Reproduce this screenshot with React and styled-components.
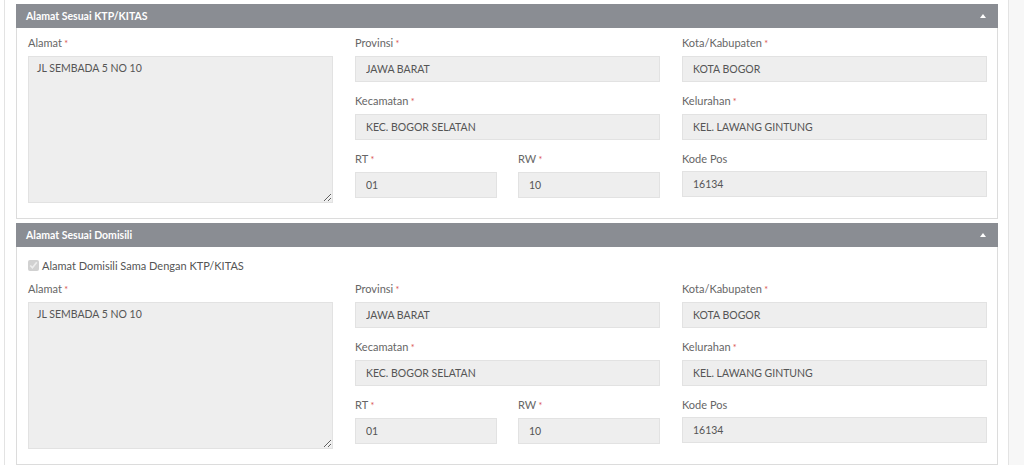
import React from "react";
import styled, { createGlobalStyle } from "styled-components";

const GlobalStyle = createGlobalStyle`
  html, body {
    margin: 0;
    padding: 0;
    background: #fff;
    font-family: Lato, "Open Sans", sans-serif;
  }
`;

const address = {
  alamat: "JL SEMBADA 5 NO 10",
  provinsi: "JAWA BARAT",
  kota: "KOTA BOGOR",
  kecamatan: "KEC. BOGOR SELATAN",
  kelurahan: "KEL. LAWANG GINTUNG",
  rt: "01",
  rw: "10",
  kodePos: "16134",
};

const Field = ({ label, required, value, area }) => (
  <FieldWrap>
    <Label>
      {label}
      {required && <Req> *</Req>}
    </Label>
    {area ? (
      <TextArea readOnly value={value} />
    ) : (
      <Input readOnly value={value} />
    )}
  </FieldWrap>
);

const AddressPanel = ({ title, data, sameAs }) => (
  <Panel>
    <PanelHeader>
      <PanelTitle>{title}</PanelTitle>
      <Caret />
    </PanelHeader>
    <PanelBody>
      {sameAs && (
        <CheckRow>
          <Check type="checkbox" checked disabled readOnly />
          <CheckText>{sameAs}</CheckText>
        </CheckRow>
      )}
      <Grid>
        <Column>
          <Field label="Alamat" required area value={data.alamat} />
        </Column>
        <Column>
          <Field label="Provinsi" required value={data.provinsi} />
          <Field label="Kecamatan" required value={data.kecamatan} />
          <Pair>
            <Field label="RT" required value={data.rt} />
            <Field label="RW" required value={data.rw} />
          </Pair>
        </Column>
        <Column>
          <Field label="Kota/Kabupaten" required value={data.kota} />
          <Field label="Kelurahan" required value={data.kelurahan} />
          <Field label="Kode Pos" value={data.kodePos} />
        </Column>
      </Grid>
    </PanelBody>
  </Panel>
);

const App = () => (
  <>
    <GlobalStyle />
    <Page>
      <Content>
        <AddressPanel title="Alamat Sesuai KTP/KITAS" data={address} />
        <AddressPanel
          title="Alamat Sesuai Domisili"
          data={address}
          sameAs="Alamat Domisili Sama Dengan KTP/KITAS"
        />
      </Content>
      <SideStrip />
    </Page>
  </>
);

const Page = styled.div`
  display: flex;
  height: 465px;
  padding-left: 4px;
  box-sizing: border-box;
  overflow: hidden;
`;

const Content = styled.div`
  width: 1005px;
  box-sizing: border-box;
  border-left: 1px solid #e3e3e3;
  border-right: 1px solid #e3e3e3;
  padding: 4px 10px 0 11px;
  display: flex;
  flex-direction: column;
  gap: 4px;
`;

const SideStrip = styled.div`
  flex: 1;
  background: #f7f7f7;
`;

const Panel = styled.section`
  border: 1px solid #dcdcdc;
  border-top: none;
  background: #fff;
`;

const PanelHeader = styled.div`
  height: 24px;
  background: #8a8d93;
  display: flex;
  align-items: center;
  justify-content: space-between;
  padding: 0 11px 0 10px;
  margin: 0 -1px;
`;

const PanelTitle = styled.span`
  color: #fff;
  font-size: 10.5px;
  font-weight: 700;
`;

const Caret = styled.span`
  width: 0;
  height: 0;
  border-left: 3.5px solid transparent;
  border-right: 3.5px solid transparent;
  border-bottom: 4px solid #fff;
  margin-right: 1px;
`;

const PanelBody = styled.div`
  padding: 8px 10px 15px 11px;
`;

const CheckRow = styled.label`
  display: flex;
  align-items: center;
  gap: 3px;
  height: 18px;
  margin: 1px 0 8px;
`;

const Check = styled.input`
  width: 11px;
  height: 11px;
  margin: 0;
  accent-color: #c8c8c8;
`;

const CheckText = styled.span`
  font-size: 11px;
  color: #555;
`;

const Grid = styled.div`
  display: grid;
  grid-template-columns: repeat(3, minmax(0, 1fr));
  column-gap: 22px;
`;

const Column = styled.div`
  display: flex;
  flex-direction: column;
  gap: 12px;
  min-width: 0;
`;

const Pair = styled.div`
  display: grid;
  grid-template-columns: repeat(2, minmax(0, 1fr));
  column-gap: 21px;
`;

const FieldWrap = styled.div`
  display: flex;
  flex-direction: column;
  min-width: 0;
`;

const Label = styled.div`
  font-size: 11px;
  line-height: 14px;
  color: #666;
  margin-bottom: 5px;
`;

const Req = styled.span`
  color: #d9534f;
  font-size: 9px;
`;

const Input = styled.input`
  width: 100%;
  min-width: 0;
  height: 26px;
  box-sizing: border-box;
  border: 1px solid #e2e2e2;
  background: #eeeeee;
  padding: 0 10px;
  font-family: Lato, "Open Sans", sans-serif;
  font-size: 10.5px;
  color: #555;
  outline: none;
`;

const TextArea = styled.textarea`
  width: 100%;
  height: 147px;
  box-sizing: border-box;
  border: 1px solid #e2e2e2;
  background: #eeeeee;
  padding: 4px 8px;
  font-family: Lato, "Open Sans", sans-serif;
  font-size: 10.5px;
  line-height: 15px;
  color: #555;
  outline: none;
  resize: vertical;
`;

export default App;
